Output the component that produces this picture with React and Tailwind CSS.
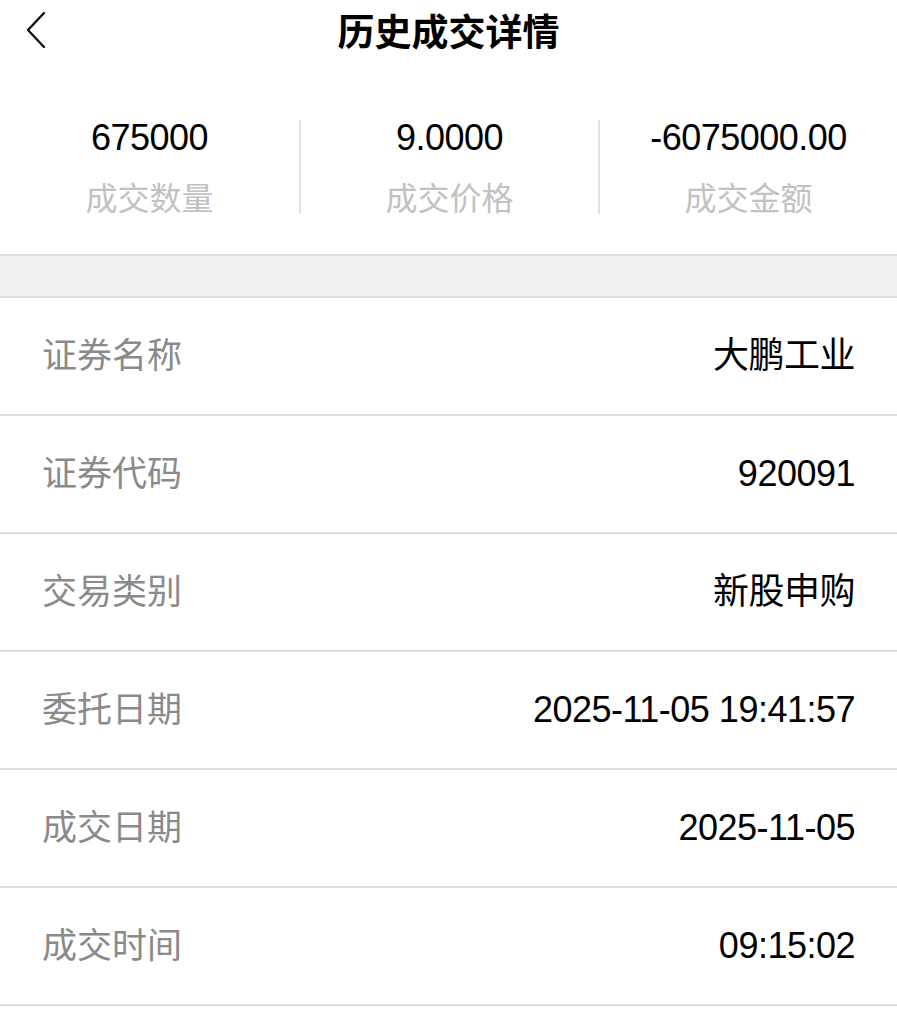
import React from "react";

const cjk = "font-['Noto_Sans_CJK_SC',sans-serif]";
const mixed = "font-['Liberation_Sans','Noto_Sans_CJK_SC',sans-serif]";

const stats = [
    { value: "675000", label: "成交数量" },
    { value: "9.0000", label: "成交价格" },
    { value: "-6075000.00", label: "成交金额" },
];

const rows = [
    { label: "证券名称", value: "大鹏工业" },
    { label: "证券代码", value: "920091" },
    { label: "交易类别", value: "新股申购" },
    { label: "委托日期", value: "2025-11-05 19:41:57" },
    { label: "成交日期", value: "2025-11-05" },
    { label: "成交时间", value: "09:15:02" },
];

function BackIcon() {
    return (
        <svg width="20" height="38" viewBox="0 0 20 38" fill="none">
            <polyline points="18,2 2,19 18,36" stroke="#111" strokeWidth="2.4" strokeLinecap="round" strokeLinejoin="round"/>
        </svg>
    );
}

export default function App() {
    return (
        <div className="min-h-screen bg-white">
            <div className="grid h-[60px] grid-cols-[1fr_auto_1fr] items-center">
                <div className="pl-[26px] flex items-center">
                    <BackIcon/>
                </div>
                <h1 className={`${cjk} text-[37px] leading-[60px] font-bold text-black`}>
                    历史成交详情
                </h1>
                <div/>
            </div>

            <div className="grid grid-cols-3 pt-[60px] pb-[40px]">
                {stats.map((s, i) =>
                    <div key={s.label} className={`flex flex-col items-center ${i > 0 ? "border-l-2 border-[#e2e2e2]" : ""}`}>
                        <div className={`${mixed} text-[36px] leading-[35px] tracking-[-0.5px] text-black`}>
                            {s.value}
                        </div>
                        <div className={`${cjk} mt-[23px] text-[32px] leading-[36px] text-[#c2c2c2]`}>
                            {s.label}
                        </div>
                    </div>
                )}
            </div>

            <div className="h-[44px] border-y-2 border-[#dcdcdc] bg-[#f0f0f0]"/>

            <div>
                {rows.map(row =>
                    <div key={row.label} className="flex h-[118px] items-center justify-between border-b-2 border-[#dcdcdc] px-[42px]">
                        <span className={`${cjk} pb-[6px] text-[35px] text-[#8a8a8a]`}>{row.label}</span>
                        <span className={`${mixed} text-[36px] tracking-[-0.5px] text-black`}>{row.value}</span>
                    </div>
                )}
            </div>
        </div>
    );
}
